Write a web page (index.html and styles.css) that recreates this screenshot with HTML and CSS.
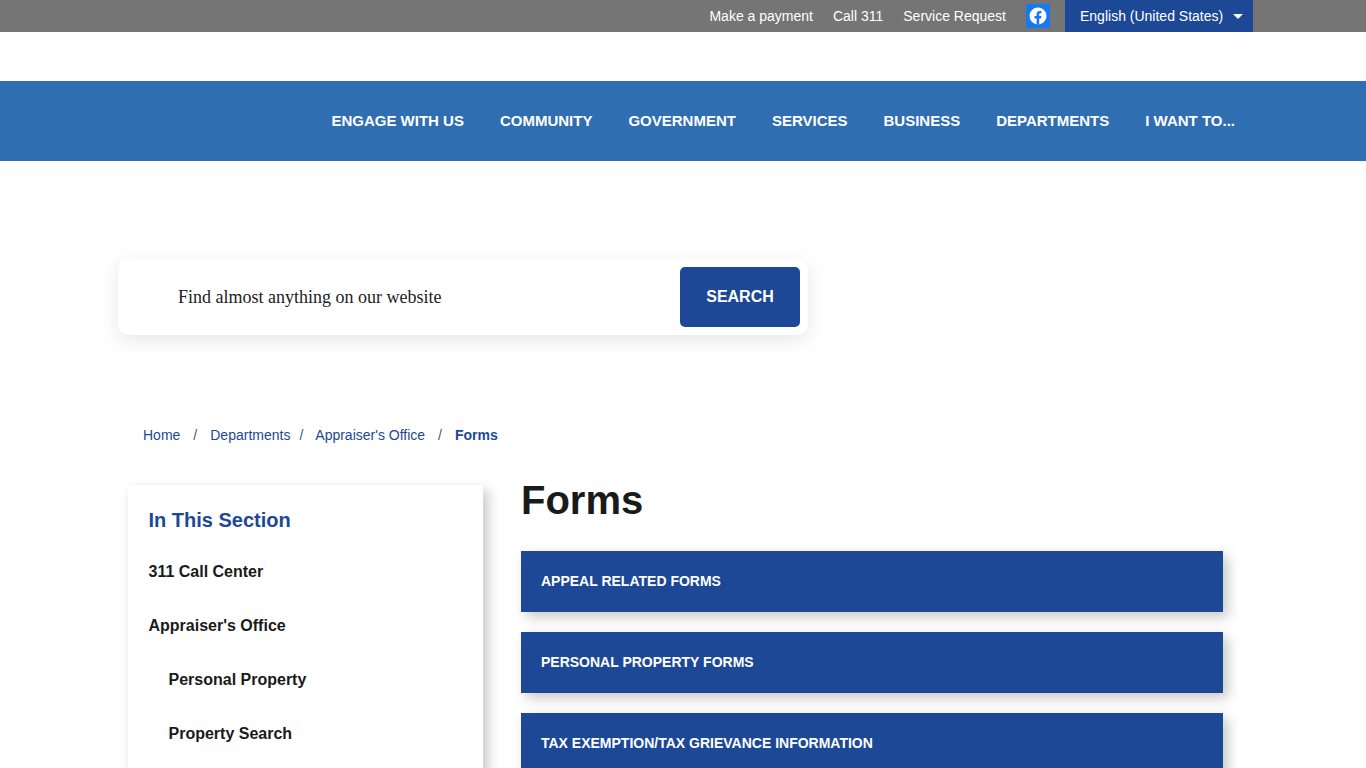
FILE: index.html
```html
<!DOCTYPE html>
<html lang="en">
<head>
  <meta charset="UTF-8" />
  <title>Forms</title>
  <link rel="stylesheet" href="styles.css">
</head>
<body>
  <div class="topbar">
    <a href="#">Make a payment</a>
    <a href="#">Call 311</a>
    <a href="#">Service Request</a>
    <a href="#" class="fb">
      <svg width="24" height="24" viewBox="0 0 24 24">
        <rect width="24" height="24" rx="2" fill="#1877f2"/>
        <circle cx="12" cy="12" r="8.5" fill="#fff"/>
        <path d="M10.6 20.4v-6h-2.1V12h2.1v-1.8c0-2.1 1.2-3.2 3.1-3.2.9 0 1.8.2 1.8.2v2h-1c-1 0-1.3.6-1.3 1.2V12h2.3l-.4 2.4h-1.9v6z" fill="#1877f2"/>
      </svg>
    </a>
    <div class="lang">English (United States)<span class="caret"></span></div>
  </div>

  <div class="logo-row"></div>

  <nav class="mainnav">
    <a href="#">ENGAGE WITH US</a>
    <a href="#">COMMUNITY</a>
    <a href="#">GOVERNMENT</a>
    <a href="#">SERVICES</a>
    <a href="#">BUSINESS</a>
    <a href="#">DEPARTMENTS</a>
    <a href="#">I WANT TO...</a>
  </nav>

  <div class="search-box">
    <span class="search-text">Find almost anything on our website</span>
    <button class="search-btn">SEARCH</button>
  </div>

  <div class="crumbs">
    <a href="#">Home</a><span class="sep sep-a">/</span>
    <a href="#">Departments</a><span class="sep sep-b">/</span>
    <a href="#">Appraiser's Office</a><span class="sep sep-a">/</span>
    <b>Forms</b>
  </div>

  <div class="content">
    <aside class="side">
      <h2>In This Section</h2>
      <a href="#">311 Call Center</a>
      <a href="#">Appraiser's Office</a>
      <a href="#" class="sub">Personal Property</a>
      <a href="#" class="sub">Property Search</a>
    </aside>
    <main class="main">
      <h1>Forms</h1>
      <div class="acc">APPEAL RELATED FORMS</div>
      <div class="acc">PERSONAL PROPERTY FORMS</div>
      <div class="acc">TAX EXEMPTION/TAX GRIEVANCE INFORMATION</div>
    </main>
  </div>
</body>
</html>
```

FILE: styles.css
```css
* {
  margin: 0;
  padding: 0;
  box-sizing: border-box;
}
html, body {
  height: 768px;
  overflow: hidden;
}
body {
  font-family: "Liberation Sans", Arial, sans-serif;
  background: #fff;
  color: #1a1a1a;
}
a {
  text-decoration: none;
  color: inherit;
}
.topbar {
  height: 32px;
  background: #757575;
  color: #fff;
  font-size: 14px;
  display: flex;
  justify-content: flex-end;
  align-items: center;
  padding-right: 113px;
}
.topbar > a {
  margin-right: 20px;
}
.topbar .fb {
  display: flex;
  margin-left: 0;
  margin-right: 15px;
}
.lang {
  width: 188px;
  height: 32px;
  background: #1c4896;
  display: flex;
  align-items: center;
  padding-left: 15px;
}
.caret {
  margin-left: 10px;
  margin-top: 1px;
  border-left: 5px solid transparent;
  border-right: 5px solid transparent;
  border-top: 5px solid #fff;
}
.logo-row {
  height: 49px;
}
.mainnav {
  height: 80px;
  background: #2f6eb1;
  display: flex;
  justify-content: flex-end;
  align-items: center;
  gap: 36px;
  padding-right: 131px;
  padding-bottom: 2px;
  color: #fff;
  font-size: 15px;
  font-weight: bold;
}
.search-box {
  width: 690px;
  height: 76px;
  margin: 98px 0 0 118px;
  background: #fff;
  border-radius: 10px;
  box-shadow: 0 5px 20px rgba(0, 0, 0, 0.1);
  display: flex;
  align-items: center;
  justify-content: space-between;
  padding: 0 8px 0 60px;
}
.search-text {
  font-family: "Liberation Serif", "Times New Roman", serif;
  font-size: 18px;
  color: #222;
}
.search-btn {
  width: 120px;
  height: 60px;
  background: #1c4896;
  color: #fff;
  border: none;
  border-radius: 5px;
  font-family: "Liberation Sans", Arial, sans-serif;
  font-size: 16px;
  font-weight: bold;
}
.crumbs {
  margin: 92px 0 0 143px;
  height: 16px;
  display: flex;
  align-items: center;
  font-size: 14px;
  color: #1c4896;
}
.crumbs .sep {
  color: #41557f;
}
.crumbs .sep-a {
  margin: 0 13px;
}
.crumbs .sep-b {
  margin: 0 12px 0 9px;
}
.content {
  display: flex;
  align-items: flex-start;
  margin: 42px 0 0 128px;
}
.side {
  width: 355px;
  height: 320px;
  flex: none;
  padding: 23px 20.5px;
  box-shadow: 5px 5px 12px rgba(0, 0, 0, 0.22);
  background: #fff;
}
.side h2 {
  font-size: 20px;
  line-height: 24px;
  color: #1c4896;
  margin-bottom: 30px;
}
.side a {
  display: block;
  font-size: 16px;
  line-height: 20px;
  font-weight: bold;
  margin-bottom: 34px;
}
.side a.sub {
  padding-left: 20px;
}
.main {
  margin-left: 38px;
  width: 702px;
  flex: none;
}
.main h1 {
  font-size: 40px;
  line-height: 46px;
  margin-top: -8px;
  margin-bottom: 28px;
}
.acc {
  height: 61px;
  background: #1c4896;
  color: #fff;
  font-size: 14px;
  font-weight: bold;
  display: flex;
  align-items: center;
  padding-left: 20px;
  padding-bottom: 2px;
  margin-bottom: 20px;
  box-shadow: 5px 5px 12px rgba(0, 0, 0, 0.22);
}
```
